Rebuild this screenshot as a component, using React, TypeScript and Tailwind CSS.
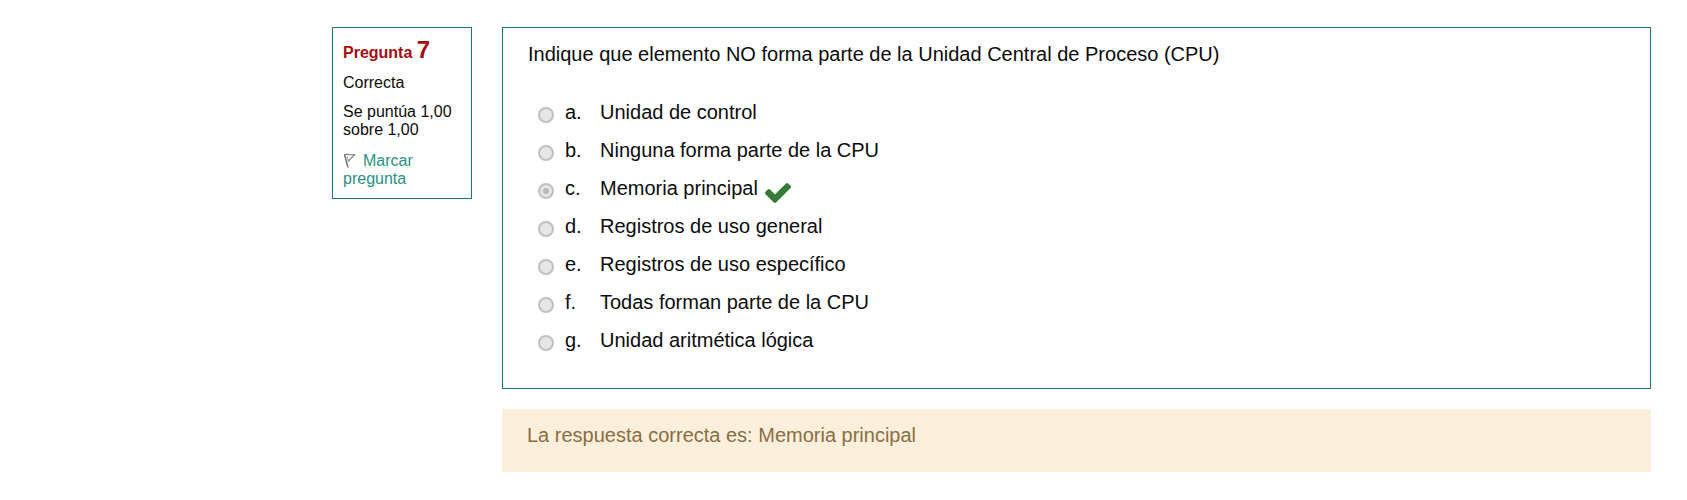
const options = [
  { letter: "a.", text: "Unidad de control" },
  { letter: "b.", text: "Ninguna forma parte de la CPU" },
  { letter: "c.", text: "Memoria principal", selected: true },
  { letter: "d.", text: "Registros de uso general" },
  { letter: "e.", text: "Registros de uso específico" },
  { letter: "f.", text: "Todas forman parte de la CPU" },
  { letter: "g.", text: "Unidad aritmética lógica" },
];

function CheckMark() {
  return (
    <svg className="mt-[14px] ml-[7px] h-[20px] w-[26px] shrink-0" viewBox="121 334 1550 1188" preserveAspectRatio="none" fill="#357a38">
      <path d="M1671 566q0 40-28 68l-724 724-136 136q-28 28-68 28t-68-28l-136-136-362-362q-28-28-28-68t28-68l136-136q28-28 68-28t68 28l294 295 656-657q28-28 68-28t68 28l136 136q28 28 28 68z" />
    </svg>
  );
}

function Flag() {
  return (
    <svg className="mr-[7px] inline-block h-[15px] w-[13px] align-[-2px]" viewBox="0 0 13 15" fill="none" stroke="#777" strokeWidth="1.1">
      <path d="M1.500 1.5 5 14.5" strokeWidth="1.5" />
      <path d="M1.5 1.8C4 .6 6 2.4 12 1.6 9.500 3.300 7.500 6 5 8.500" />
      <path d="M4 3.500 5.500 7.500" stroke="#aaa" />
    </svg>
  );
}

export default function App() {
  return (
    <div className="flex h-[500px] w-[1687px] items-start bg-white pt-[27px] pl-[332px] font-['Liberation_Sans',Arial,sans-serif] text-[#0c0c0c]">
      <aside className="h-[172px] w-[140px] shrink-0 border border-[#1f7477] pt-[8px] pl-[10px] text-base leading-[18px]">
        <h3 className="h-[28px] font-bold leading-[28px] text-[#a50d12]">
          Pregunta <span className="text-2xl leading-[28px]">7</span>
        </h3>
        <div className="mt-[10px]">Correcta</div>
        <div className="mt-[11px]">Se puntúa 1,00<br />sobre 1,00</div>
        <div className="mt-[13px] text-[#2b9184]">
          <Flag />Marcar<br />pregunta
        </div>
      </aside>
      <main className="ml-[30px] w-[1149px] shrink-0 text-xl">
        <section className="h-[362px] border border-[#1f7477] pt-[11px] pl-[24px]">
          <p className="pl-px leading-[30px]">Indique que elemento NO forma parte de la Unidad Central de Proceso (CPU)</p>
          <div className="mt-[24px] pl-[11px]">
            {options.map((option) => (
              <div key={option.letter} className="flex h-[38px] items-start">
                <span className="mt-[14px] flex size-4 shrink-0 items-center justify-center rounded-full border-2 border-[#c0c0c0] bg-[#e6e6e6]">
                  {option.selected && <span className="size-1.5 rounded-full bg-[#b8b8b8]" />}
                </span>
                <span className="ml-[11px] w-[35px] shrink-0 leading-[38px]">{option.letter}</span>
                <span className="leading-[38px]">{option.text}</span>
                {option.selected && <CheckMark />}
              </div>
            ))}
          </div>
        </section>
        <section className="mt-[20px] h-[63px] bg-[#fcefdc] pt-[11px] pl-[25px] leading-[30px] text-[#8a6d43]">
          La respuesta correcta es: Memoria principal
        </section>
      </main>
    </div>
  );
}
